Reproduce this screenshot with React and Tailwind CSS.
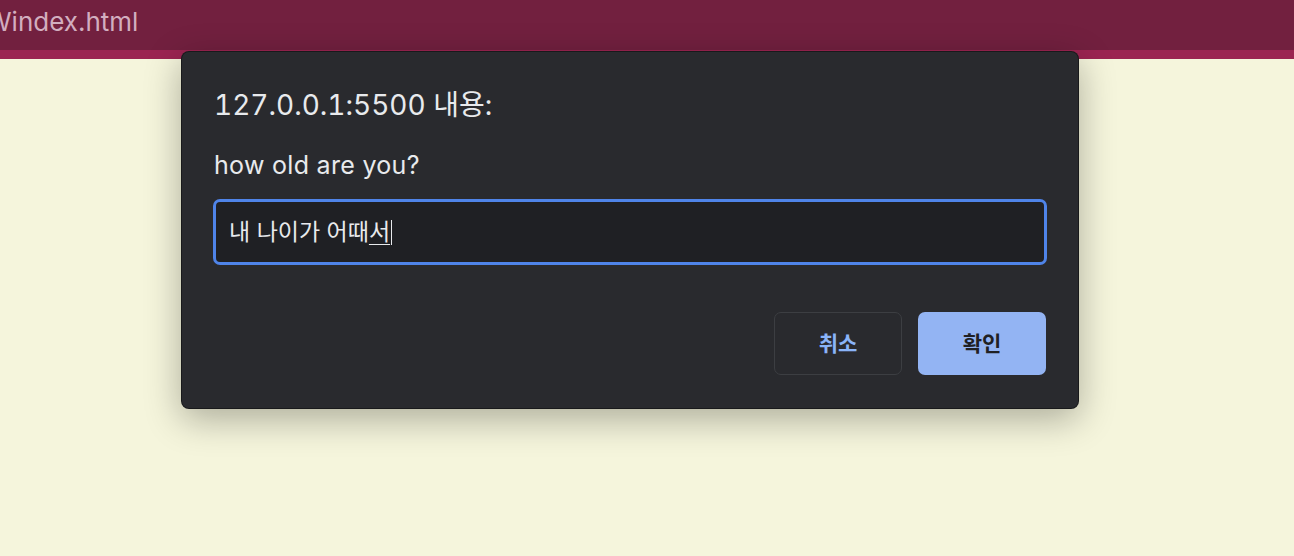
export default function App() {
  const font = { fontFamily: 'Inter, "Noto Sans CJK KR", sans-serif' };
  return (
    <div className="w-[1294px] h-[556px] overflow-hidden bg-[#f5f5dc] flex flex-col" style={font}>
      <div className="h-[50px] shrink-0 bg-[#72203f] flex items-center">
        <span className="-ml-[14px] text-[26px] leading-none text-[#d2aebf] -mt-[6px] whitespace-nowrap">Windex.html</span>
      </div>
      <div className="h-[9px] shrink-0 bg-[#9b2451]"></div>
      <div className="flex-1 relative">
        <div className="absolute left-[181px] top-[-8px] w-[898px] rounded-[8px] bg-[#292a2e] border border-black/40 shadow-[0_10px_36px_rgba(0,0,0,0.3)] px-[31px] pt-[36px] pb-[33px] flex flex-col">
          <div className="text-[28px] leading-[34px] text-[#e8eaed] tabular-nums pl-[1px]">127.0.0.1:5500 내용:</div>
          <div className="mt-[29px] text-[25px] leading-[29px] text-[#e8eaed] tracking-[0.3px] pl-[1px]">how old are you?</div>
          <div className="mt-[19px] h-[66px] rounded-[7px] border-[3px] border-[#4f84e9] bg-[#1f2024] flex items-center pl-[13px]">
            <span className="text-[23px] text-[#e8eaed] leading-none">내 나이가 어때</span>
            <span className="text-[23px] text-[#e8eaed] leading-none underline underline-offset-[4px] decoration-[1px]">서</span>
            <span className="w-[1px] h-[25px] bg-[#e8eaed] ml-[1px]"></span>
          </div>
          <div className="mt-[47px] flex justify-end gap-[16px] pr-[1px]">
            <button className="w-[128px] h-[63px] rounded-[7px] border border-[#3c3e42] text-[21px] font-bold text-[#8ab4f8] bg-transparent">취소</button>
            <button className="w-[128px] h-[63px] rounded-[7px] bg-[#93b4f3] text-[21px] font-bold text-[#202124]">확인</button>
          </div>
        </div>
      </div>
    </div>
  );
}
